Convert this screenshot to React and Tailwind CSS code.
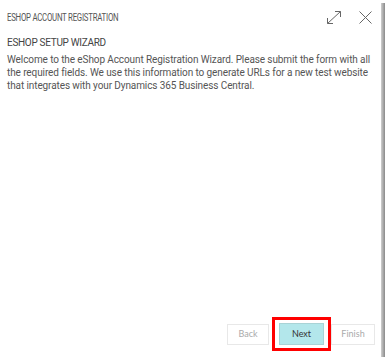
export default function App() {
  return (
    <div className="flex h-[359px] w-[385px] bg-white font-['Roboto',sans-serif]">
      <div className="flex flex-1 flex-col">
        <div className="flex items-center justify-between pl-[7px] pr-[9px] pt-[10px]">
          <span className="inline-block origin-left scale-x-[0.78] text-[10px] leading-[14px] tracking-[-0.3px] text-[#555]">ESHOP ACCOUNT REGISTRATION</span>
          <div className="flex items-center gap-[17px]">
            <svg width="16" height="15" viewBox="0 0 16 15" fill="none" stroke="#666" strokeWidth="1">
              <path d="M1.5 13.5 L14.5 1.5" />
              <path d="M9 1.5 H14.5 V7" />
              <path d="M1.5 8 V13.5 H7" />
            </svg>
            <svg width="13" height="13" viewBox="0 0 13 13" fill="none" stroke="#666" strokeWidth="1">
              <path d="M0.5 0.5 L12.5 12.5 M12.5 0.5 L0.5 12.5" />
            </svg>
          </div>
        </div>
        <div className="pl-[7px] pr-[9px] pt-[11px]">
          <h1 className="text-[10px] leading-[14px] tracking-[-0.3px] text-[#444]">ESHOP SETUP WIZARD</h1>
          <p className="mt-[3px] text-[10px] leading-[13px] tracking-[-0.1px] text-[#555]">
            Welcome to the eShop Account Registration Wizard. Please submit the form with all the required fields. We use this information to generate URLs for a new test website that integrates with your Dynamics 365 Business Central.
          </p>
        </div>
        <div className="mt-auto mb-[8px] flex items-center justify-end pr-[6px] font-['Lato',sans-serif]">
          <button className="h-[21px] w-[42px] border border-[#e8e8e8] bg-white text-[9px] text-[#aaa]">Back</button>
          <div className="ml-[3px] border-[3px] border-[#ff0000] px-[4px] py-[3px]">
            <button className="block h-[22px] w-[45px] border border-[#a9d3d6] bg-[#b3e7eb] text-[9px] text-[#333]">Next</button>
          </div>
          <button className="h-[21px] w-[44px] border border-[#e8e8e8] bg-white text-[9px] text-[#aaa]">Finish</button>
        </div>
      </div>
      <div className="mt-[3px] mb-[2px] w-[4px] bg-gradient-to-r from-[#d0d0d0] to-[#8a8a8a]" />
    </div>
  );
}
